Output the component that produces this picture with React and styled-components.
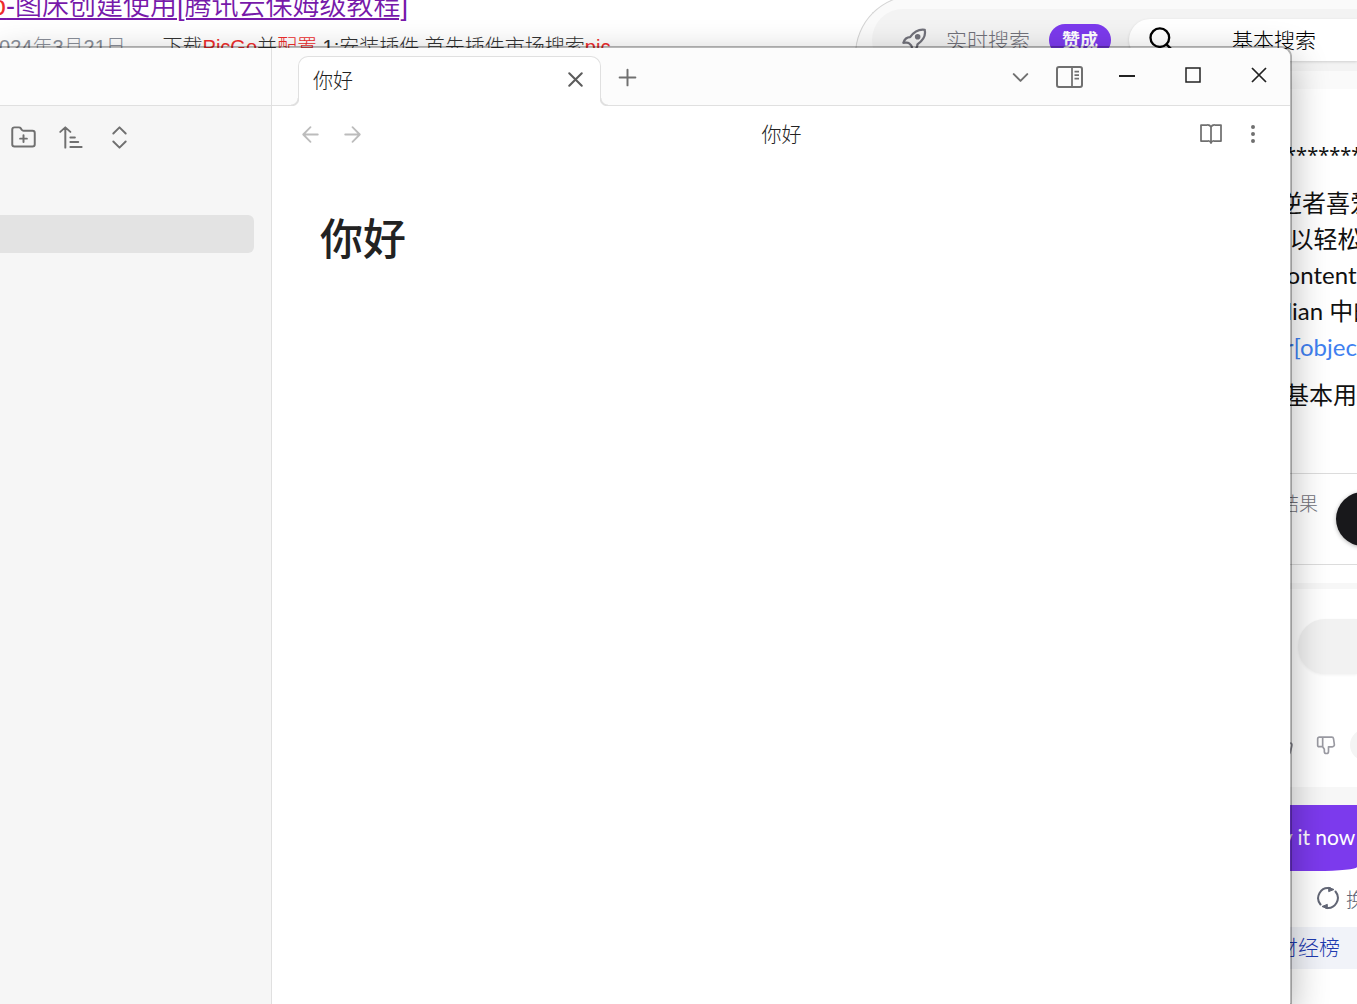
import React from "react";
import styled, { createGlobalStyle } from "styled-components";

const GlobalStyle = createGlobalStyle`
  * { box-sizing: border-box; }
  body {
    margin: 0;
    background: #fff;
    overflow: hidden;
    font-family: "Liberation Sans", "Noto Sans CJK SC", sans-serif;
    font-weight: 300;
    color: #222;
  }
  button {
    font: inherit;
    color: inherit;
    border: 0;
    padding: 0;
    margin: 0;
    background: none;
    cursor: pointer;
  }
  p, h1, h2 { margin: 0; font-weight: inherit; }
  svg { display: block; flex: none; }
`;

/* ---------- browser page behind the editor ---------- */

const Desktop = styled.div`
  position: relative;
  height: 100vh;
  overflow: hidden;
`;

const Page = styled.main`
  display: flex;
  height: 100%;
  white-space: nowrap;
`;

const Results = styled.section`
  flex: 1;
  min-width: 0;
  overflow: hidden;
`;

const ResultTitle = styled.a`
  display: block;
  margin: -14px 0 0 -9px;
  font-size: 27px;
  font-weight: 350;
  line-height: 40px;
  color: #7719aa;
  text-decoration: underline;
  text-decoration-thickness: 2px;
  text-underline-offset: 3px;
`;

const ResultText = styled.p`
  margin: 9px 0 0 -12px;
  font-size: 20px;
  line-height: 24px;
  color: #333;
  white-space: pre;
`;

const Hit = styled.em`
  font-style: normal;
  color: #ee2c2c;
`;

const ResultDate = styled.span`
  color: #8a8f99;
`;

const Assistant = styled.aside`
  flex: 0 0 502px;
  display: flex;
  flex-direction: column;
`;

const ModeCard = styled.div`
  height: 94px;
  margin-top: -5px;
  padding: 13px 0 18px 16px;
  border: 1px solid #d4d4d4;
  border-width: 1px 0 0 1px;
  border-radius: 60px 0 0 0;
  background: #fafafa;
`;

const ModeTrack = styled.div`
  display: flex;
  align-items: flex-start;
  height: 100%;
  padding-top: 10px;
  border-radius: 38px 0 0 38px;
  background: #f3f3f3;
`;

const Mode = styled.button`
  display: flex;
  align-items: center;
  flex: ${(p) => (p.$active ? "1" : "none")};
  height: 42px;
  gap: ${(p) => (p.$active ? "57px" : "19px")};
  padding-left: ${(p) => (p.$active ? "18px" : "28px")};
  margin-left: ${(p) => (p.$active ? "18px" : "0")};
  border-radius: 21px 0 0 21px;
  font-size: 21px;
  color: ${(p) => (p.$active ? "#000" : "#71717a")};
  background: ${(p) => (p.$active ? "#fff" : "none")};
  box-shadow: ${(p) => (p.$active ? "0 1px 3px rgba(0,0,0,.15)" : "none")};
`;

const ModeLabel = styled.span`
  padding-bottom: 3px;
`;

const Badge = styled.span`
  display: flex;
  align-items: center;
  height: 32px;
  padding: 0 13px 2px;
  border-radius: 16px;
  font-size: 18px;
  font-weight: 700;
  color: #fff;
  background: #7c3aed;
`;

const Answer = styled.div`
  align-self: flex-end;
  width: 127px;
  overflow: hidden;
  font-family: Lato, "Noto Sans CJK SC", sans-serif;
`;

const AnswerText = styled.div`
  display: flex;
  flex-direction: column;
  gap: 12px;
  height: 384px;
  padding-top: 48px;
  font-size: 24px;
  font-weight: 400;
  line-height: 36px;
  color: #111;
`;

const Para = styled.p`
  font-weight: 400;
`;

const Divider = styled(Para)`
  font-family: "Noto Sans", sans-serif;
  font-size: 20px;
`;

const AnswerLink = styled.a`
  color: #4080f0;
  text-decoration: none;
`;

const Sources = styled.div`
  display: flex;
  align-items: flex-start;
  gap: 18px;
  height: 92px;
  margin-bottom: 18px;
  padding: 18px 0 0 12px;
  border: 1px solid #dcdcdc;
  border-width: 1px 0;
  font-size: 19px;
  line-height: 24px;
  color: #71717a;
`;

const RoundButton = styled.button`
  flex: none;
  width: 54px;
  height: 54px;
  border-radius: 27px;
  background: #18181b;
  box-shadow: 0 1px 4px rgba(0, 0, 0, 0.3);
`;

const Band = styled.div`
  height: ${(p) => p.$height}px;
  background: #f7f7f7;
`;

const Composer = styled.div`
  display: flex;
  height: 114px;
  padding: 30px 0 29px 68px;
`;

const Prompt = styled.input`
  flex: 1;
  min-width: 0;
  border: 0;
  border-radius: 27px 0 0 27px;
  background: #f2f2f2;
  box-shadow: 0 1px 3px rgba(0, 0, 0, 0.06);
`;

const Feedback = styled.div`
  display: flex;
  align-items: center;
  gap: 22px;
  height: 84px;
  padding-left: 42px;
  color: #9a9aa2;
`;

const Vote = styled.button`
  flex: none;
`;

const Pill = styled.button`
  flex: none;
  width: 60px;
  height: 32px;
  margin-left: -8px;
  border-radius: 16px;
  background: #f4f4f4;
`;

const TryButton = styled.button`
  display: block;
  width: 100%;
  height: 66px;
  padding: 0 0 3px 34px;
  border-radius: 0 0 40px 0 / 0 0 4px 0;
  text-align: left;
  font-size: 21px;
  font-weight: 400;
  color: #fff;
  background: #7c3aed;
`;

const Refresh = styled.button`
  display: flex;
  align-items: center;
  gap: 6px;
  height: 56px;
  padding: 0 0 2px 86px;
  font-size: 19px;
  color: #626675;
`;

const Ranking = styled.a`
  display: block;
  height: 42px;
  padding-left: 47px;
  font-size: 21px;
  line-height: 40px;
  color: #1e3aaf;
  text-decoration: none;
  background: #f1f3f9;
`;

/* ---------- editor window ---------- */

const Window = styled.section`
  position: absolute;
  inset: 46px 65px 0 0;
  display: flex;
  border: 2px solid rgba(0, 0, 0, 0.28);
  border-width: 2px 2px 0 0;
  border-radius: 0 11px 0 0;
  background: #fff;
  background-clip: padding-box;
  box-shadow: 0 12px 36px rgba(0, 0, 0, 0.3);
  overflow: hidden;
`;

const Sidebar = styled.nav`
  flex: 0 0 272px;
  border-right: 1px solid #e0e0e0;
  background: #f6f6f6;
`;

const Bar = styled.div`
  display: flex;
  height: 58px;
  border-bottom: 1px solid #e0e0e0;
  background: #fcfcfc;
`;

const SidebarTools = styled.div`
  display: flex;
  height: 109px;
  margin-left: -1px;
  padding-top: 12px;
  color: #707070;
`;

const IconButton = styled.button`
  display: flex;
  align-items: center;
  justify-content: center;
  flex: none;
  width: ${(p) => p.$width}px;
  height: 38px;
`;

const ActiveFile = styled.div`
  height: 38px;
  margin-right: 17px;
  border-radius: 0 6px 6px 0;
  background: #e3e3e3;
`;

const Editor = styled.div`
  flex: 1;
  min-width: 0;
`;

const TabBar = styled(Bar)`
  padding-left: 26px;
`;

const Tab = styled.div`
  position: relative;
  display: flex;
  align-items: center;
  justify-content: space-between;
  width: 303px;
  height: 50px;
  margin-top: 8px;
  padding: 0 7px 4px 14px;
  border: 1px solid #e0e0e0;
  border-bottom: 0;
  border-radius: 10px 10px 0 0;
  font-size: 20px;
  background: #fff;

  &::before,
  &::after {
    content: "";
    position: absolute;
    bottom: 0;
    width: 8px;
    height: 8px;
  }
  &::before {
    right: 100%;
    background: radial-gradient(circle at 0 0, #fcfcfc 6px, #e0e0e0 7px, #e0e0e0 8px, #fff 9px);
  }
  &::after {
    left: 100%;
    background: radial-gradient(circle at 100% 0, #fcfcfc 6px, #e0e0e0 7px, #e0e0e0 8px, #fff 9px);
  }
`;

const TabClose = styled(IconButton)`
  color: #5c5c5c;
`;

const TabTools = styled.div`
  display: flex;
  flex: 1;
  padding: 10px 0 0 5px;
  color: #707070;
`;

const Spacer = styled.div`
  flex: 1;
`;

const WindowControls = styled.div`
  display: flex;
  margin-right: -2px;
  padding-top: 8px;
  color: #222;
`;

const ViewHeader = styled.header`
  display: grid;
  grid-template-columns: 1fr auto 1fr;
  align-items: center;
  height: 56px;
  padding: 0 16px 0 17px;
  color: #707070;
`;

const Group = styled.div`
  display: flex;
  justify-content: ${(p) => (p.$end ? "flex-end" : "flex-start")};
  color: ${(p) => (p.$end ? "#707070" : "#bcbcbc")};
`;

const ViewTitle = styled.h2`
  padding-bottom: 2px;
  font-size: 20px;
  color: #222;
`;

const Document = styled.article`
  padding: 48px;
`;

const DocTitle = styled.h1`
  font-size: 43px;
  font-weight: 500;
  line-height: 60px;
  color: #222;
`;

const Icon = ({ size = 24, stroke = 2, children }) => (
  <svg
    width={size}
    height={size}
    viewBox="0 0 24 24"
    fill="none"
    stroke="currentColor"
    strokeWidth={stroke}
    strokeLinecap="round"
    strokeLinejoin="round"
    aria-hidden="true"
  >
    {children}
  </svg>
);

export default function App() {
  return (
    <>
      <GlobalStyle />
      <Desktop>
        <Page>
          <Results>
            <ResultTitle href="#result">
              <Hit>o</Hit>-图床创建使用[腾讯云保姆级教程]
            </ResultTitle>
            <ResultText>
              <ResultDate>2024年3月21日</ResultDate>
              {" —  下载"}
              <Hit>PicGo</Hit>并<Hit>配置</Hit>
              {" 1:安装插件,首先插件市场搜索"}
              <Hit>pic</Hit>
            </ResultText>
          </Results>

          <Assistant>
            <ModeCard>
              <ModeTrack>
                <Mode>
                  <Icon size={27}>
                    <path d="M22 2.500c-5-.7-9 1-13 6.500-3 0-5 2-6 5 2 0 4-.5 5 .5l2 2c1 1 .5 3 .5 5 3-1 5-3 5-6 5.500-4 7.500-8 6.500-12.500z" />
                    <circle cx="15.700" cy="8.700" r="1.500" fill="currentColor" />
                  </Icon>
                  <ModeLabel>实时搜索</ModeLabel>
                  <Badge>赞成</Badge>
                </Mode>
                <Mode $active>
                  <Icon size={28}>
                    <circle cx="11" cy="10" r="8" />
                    <path d="m21 20-4.300-4.300" />
                  </Icon>
                  <ModeLabel>基本搜索</ModeLabel>
                </Mode>
              </ModeTrack>
            </ModeCard>

            <Answer>
              <AnswerText>
                <Divider>****************</Divider>
                <Para>
                  被叛逆者喜爱
                  <br />
                  它, 可以轻松
                  <br />
                  the Content
                  <br />
                  Obsidian 中的
                  <br />
                  <AnswerLink href="#editor">Editor[object</AnswerLink>
                </Para>
                <Para>Go的基本用法</Para>
              </AnswerText>
              <Sources>
                搜索结果
                <RoundButton aria-label="展开" />
              </Sources>
              <Band $height={6} />
              <Composer>
                <Prompt aria-label="提问" />
              </Composer>
              <Feedback>
                <Vote aria-label="赞">
                  <Icon size={22}>
                    <path d="M7 10v12M15 5.900 14 10h5.800a2 2 0 0 1 2 2.600l-2.300 8A2 2 0 0 1 17.500 22H4a2 2 0 0 1-2-2v-8a2 2 0 0 1 2-2h2.800a2 2 0 0 0 1.800-1.100L12 2a3.100 3.100 0 0 1 3 3.900Z" />
                  </Icon>
                </Vote>
                <Vote aria-label="踩">
                  <Icon size={20}>
                    <path d="M8 2.500H4a2 2 0 0 0-2 2v8a1.500 1.500 0 0 0 1.500 1.500H8zM8 2.500h11a2 2 0 0 1 2 1.700l1 7a2.500 2.500 0 0 1-2.500 3H15v5.500a2.500 2.500 0 0 1-5 0V17L8 14" />
                  </Icon>
                </Vote>
                <Pill aria-label="更多" />
              </Feedback>
              <Band $height={18} />
              <TryButton>Try it now</TryButton>
              <Refresh>
                <Icon size={24}>
                  <path d="M4.500 18.500A10 10 0 0 1 14 2.300M19.500 5.500A10 10 0 0 1 10 21.700" />
                  <path d="m13 1.500 5 2-5 2zM11 22.500l-5-2 5-2z" fill="currentColor" strokeWidth="1" />
                </Icon>
                换一换
              </Refresh>
              <Ranking href="#finance">财经榜</Ranking>
            </Answer>
          </Assistant>
        </Page>

        <Window>
          <Sidebar>
            <Bar />
            <SidebarTools>
              <IconButton $width={48} aria-label="新建文件夹">
                <Icon size={27} stroke={1.75}>
                  <path d="M12 10v6M9 13h6M4 20h16a2 2 0 0 0 2-2V8a2 2 0 0 0-2-2h-7.900a2 2 0 0 1-1.700-.9l-.8-1.200A2 2 0 0 0 7.900 3H4a2 2 0 0 0-2 2v13c0 1.100.9 2 2 2Z" />
                </Icon>
              </IconButton>
              <IconButton $width={48} aria-label="排序">
                <Icon size={27} stroke={1.75}>
                  <path d="M11 12h4M11 16h7M11 20.500h10M2 7l4.500-4L11 7M6.500 3v18" />
                </Icon>
              </IconButton>
              <IconButton $width={48} aria-label="全部展开">
                <Icon size={27} stroke={1.75}>
                  <path d="m6.500 8.500 5.500-5.500 5.500 5.500M6.500 15.500l5.500 5.500 5.500-5.500" />
                </Icon>
              </IconButton>
            </SidebarTools>
            <ActiveFile />
          </Sidebar>

          <Editor>
            <TabBar>
              <Tab>
                你好
                <TabClose $width={36} aria-label="关闭标签页">
                  <Icon size={25}>
                    <path d="M18 6 6 18M6 6l12 12" />
                  </Icon>
                </TabClose>
              </Tab>
              <TabTools>
                <IconButton $width={42} aria-label="新标签页">
                  <Icon size={27} stroke={1.75}>
                    <path d="M5 12h14M12 5v14" />
                  </Icon>
                </IconButton>
                <Spacer />
                <IconButton $width={48} aria-label="标签页列表">
                  <Icon size={27} stroke={1.75}>
                    <path d="m6 9 6 6 6-6" />
                  </Icon>
                </IconButton>
                <IconButton $width={50} aria-label="右侧边栏">
                  <svg width="27" height="22" viewBox="0 0 27 22" fill="none" stroke="currentColor" strokeWidth="2" aria-hidden="true">
                    <rect x="1" y="1" width="25" height="20" rx="2" />
                    <path d="M16 1v20M18.500 5.500H23M18.500 9H23M18.500 12.500H23" strokeWidth="1.750" />
                  </svg>
                </IconButton>
              </TabTools>
              <WindowControls>
                <IconButton $width={66} aria-label="最小化">
                  <svg width="16" height="16" viewBox="0 0 16 16" fill="none" stroke="currentColor" strokeWidth="2" aria-hidden="true">
                    <path d="M0 9h16" />
                  </svg>
                </IconButton>
                <IconButton $width={66} aria-label="最大化">
                  <svg width="16" height="16" viewBox="0 0 16 16" fill="none" stroke="currentColor" strokeWidth="1.500" aria-hidden="true">
                    <path d="M1 1h14v14H1z" />
                  </svg>
                </IconButton>
                <IconButton $width={66} aria-label="关闭">
                  <svg width="16" height="16" viewBox="0 0 16 16" fill="none" stroke="currentColor" strokeWidth="1.750" aria-hidden="true">
                    <path d="m1 1 14 14M15 1 1 15" />
                  </svg>
                </IconButton>
              </WindowControls>
            </TabBar>

            <ViewHeader>
              <Group>
                <IconButton $width={42} aria-label="后退">
                  <Icon size={25} stroke={1.75}>
                    <path d="m12 19-7-7 7-7M19 12H5" />
                  </Icon>
                </IconButton>
                <IconButton $width={42} aria-label="前进">
                  <Icon size={25} stroke={1.75}>
                    <path d="M5 12h14M12 5l7 7-7 7" />
                  </Icon>
                </IconButton>
              </Group>
              <ViewTitle>你好</ViewTitle>
              <Group $end>
                <IconButton $width={42} aria-label="阅读视图">
                  <Icon size={24} stroke={1.75}>
                    <path d="M2 3h6a4 4 0 0 1 4 2 4 4 0 0 1 4-2h6v16h-7a3 3 0 0 0-3 2 3 3 0 0 0-3-2H2zM12 5v16" />
                  </Icon>
                </IconButton>
                <IconButton $width={42} aria-label="更多选项">
                  <Icon size={24}>
                    <circle cx="12" cy="12" r="1" />
                    <circle cx="12" cy="5" r="1" />
                    <circle cx="12" cy="19" r="1" />
                  </Icon>
                </IconButton>
              </Group>
            </ViewHeader>

            <Document>
              <DocTitle>你好</DocTitle>
            </Document>
          </Editor>
        </Window>
      </Desktop>
    </>
  );
}
